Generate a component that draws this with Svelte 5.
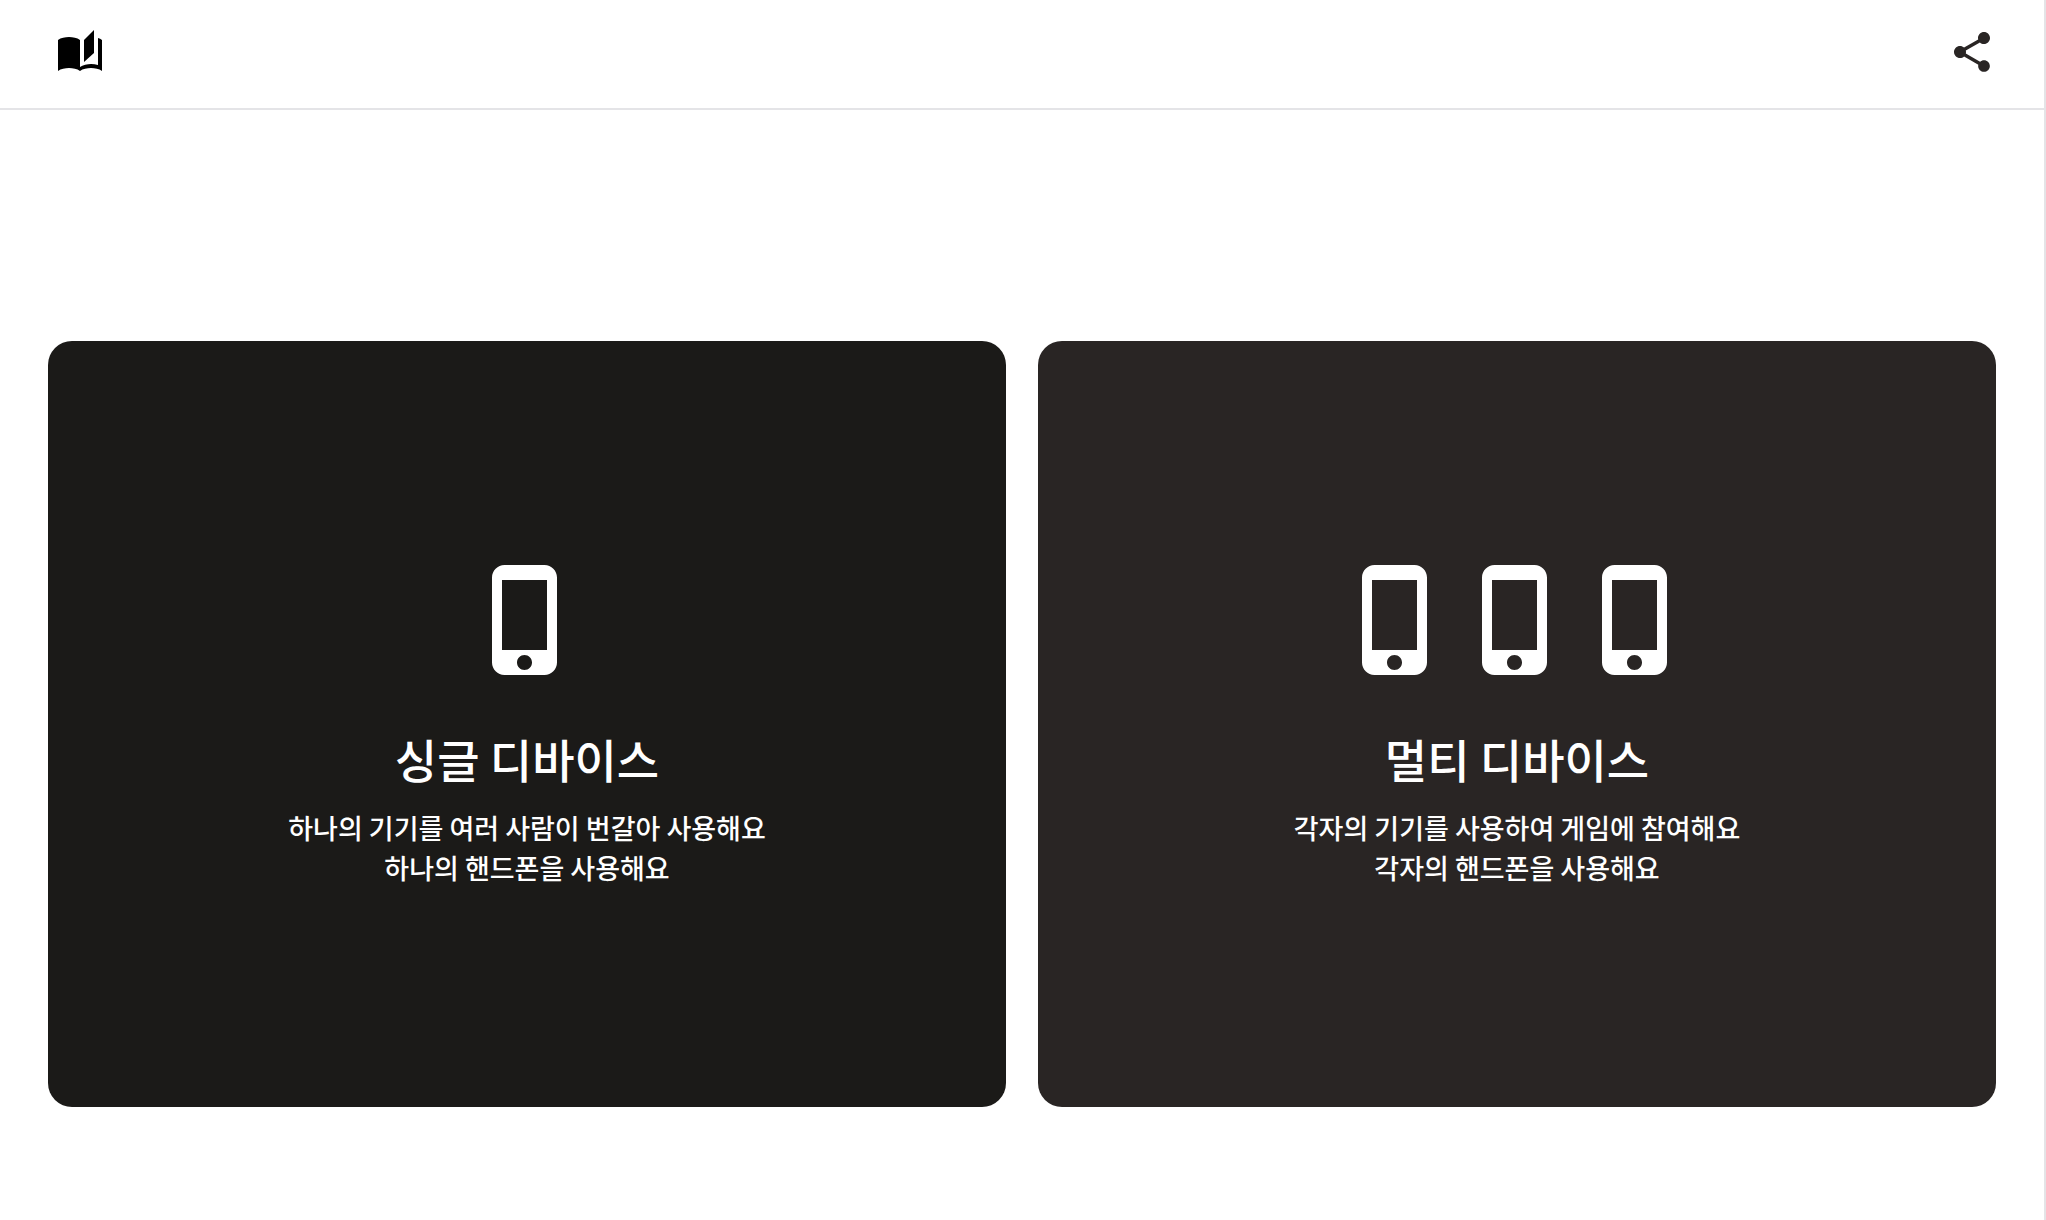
<script>
  const modes = [
    {
      id: 'single',
      title: '싱글 디바이스',
      lines: ['하나의 기기를 여러 사람이 번갈아 사용해요', '하나의 핸드폰을 사용해요'],
      phones: 1
    },
    {
      id: 'multi',
      title: '멀티 디바이스',
      lines: ['각자의 기기를 사용하여 게임에 참여해요', '각자의 핸드폰을 사용해요'],
      phones: 3
    }
  ];
</script>

<div class="page">
  <header class="topbar">
    <a class="icon-link" href="/" aria-label="홈">
      <svg class="icon" viewBox="0 0 24 24" aria-hidden="true">
        <path d="M19 1l-5 5v11l5-4.5V1z" />
        <path d="M21 5v13.5c-1.1-.35-2.3-.5-3.5-.5-1.7 0-4.15.65-5.5 1.5V6c-1.45-1.1-3.55-1.5-5.5-1.5S2.45 4.9 1 6v15.5C2.45 20.4 4.55 20 6.5 20s4.05.4 5.5 1.5c1.45-1.1 3.55-1.5 5.5-1.5s4.05.4 5.5 1.5V6c-.6-.45-1.25-.75-2-1z" />
      </svg>
    </a>
    <button class="icon-button" type="button" aria-label="공유">
      <svg class="icon" viewBox="0 0 24 24" aria-hidden="true">
        <path d="M18 16.08c-.76 0-1.44.3-1.96.77L8.91 12.7c.05-.23.09-.46.09-.7s-.04-.47-.09-.7l7.05-4.11c.54.5 1.25.81 2.04.81 1.66 0 3-1.34 3-3s-1.34-3-3-3-3 1.34-3 3c0 .24.04.47.09.7L8.04 9.81C7.5 9.31 6.79 9 6 9c-1.66 0-3 1.34-3 3s1.34 3 3 3c.79 0 1.5-.31 2.04-.81l7.12 4.16c-.05.21-.08.43-.08.65 0 1.61 1.31 2.92 2.92 2.92s2.92-1.31 2.92-2.92-1.31-2.92-2.92-2.92z" />
      </svg>
    </button>
  </header>

  <main class="modes">
    {#each modes as mode (mode.id)}
      <button class="card {mode.id}" type="button">
        <span class="phones">
          {#each Array(mode.phones) as _}
            <svg class="phone" viewBox="0 0 24 24" aria-hidden="true">
              <path d="M15.5 1h-8C6.12 1 5 2.12 5 3.5v17C5 21.88 6.12 23 7.5 23h8c1.38 0 2.5-1.12 2.5-2.5v-17C18 2.12 16.88 1 15.5 1zm-4 21c-.83 0-1.5-.67-1.5-1.5s.67-1.5 1.5-1.5 1.5.67 1.5 1.5-.67 1.5-1.5 1.5zm4.5-4H7V4h9v14z" />
            </svg>
          {/each}
        </span>
        <span class="title">{mode.title}</span>
        <span class="description">
          {#each mode.lines as line}
            <span class="line">{line}</span>
          {/each}
        </span>
      </button>
    {/each}
  </main>
</div>

<style>
  :global(body) {
    background: #fff;
    font-family: 'Noto Sans CJK KR', sans-serif;
  }

  .page {
    box-sizing: border-box;
    min-height: 100vh;
    border-right: 2px solid #e4e4e7;
  }

  .topbar {
    display: flex;
    justify-content: space-between;
    padding: 28px 48px 32px 56px;
    border-bottom: 2px solid #e4e4e7;
  }

  .icon-link,
  .icon-button {
    display: flex;
    padding: 0;
    border: 0;
    background: none;
    color: #000;
    cursor: pointer;
  }

  .icon-button {
    color: #292524;
  }

  .icon {
    width: 48px;
    height: 48px;
    fill: currentColor;
  }

  .modes {
    display: grid;
    grid-template-columns: 1fr 1fr;
    gap: 32px;
    padding: 231px 48px 48px;
  }

  .card {
    display: flex;
    flex-direction: column;
    align-items: center;
    justify-content: center;
    aspect-ratio: 5 / 4;
    padding: 0;
    border: 0;
    border-radius: 24px;
    color: #fff;
    font-family: inherit;
    font-weight: 500;
    cursor: pointer;
  }

  .single {
    background: #1b1a18;
  }

  .multi {
    background: #292524;
  }

  .phones {
    display: flex;
    margin-bottom: 48px;
  }

  .phone {
    width: 120px;
    height: 120px;
    fill: currentColor;
  }

  .title {
    margin-bottom: 20px;
    font-size: 46px;
    line-height: 60px;
  }

  .description {
    font-size: 27px;
    line-height: 40px;
  }

  .line {
    display: block;
  }
</style>
